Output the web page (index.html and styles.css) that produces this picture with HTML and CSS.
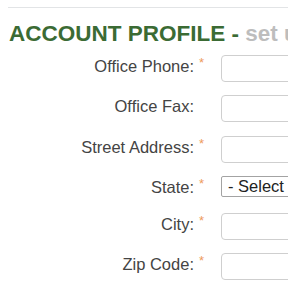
FILE: index.html
```html
<!DOCTYPE html>
<html>
<head>
<meta charset="utf-8">
<link rel="stylesheet" href="styles.css">
</head>
<body>
<div class="rule"></div>
<h1 class="title">ACCOUNT PROFILE - <span class="sub">set up your account</span></h1>
<form class="form">
  <div class="row">
    <label class="label">Office Phone:</label><span class="req">*</span>
    <input class="field" type="text">
  </div>
  <div class="row">
    <label class="label">Office Fax:</label><span class="req"></span>
    <input class="field" type="text">
  </div>
  <div class="row">
    <label class="label">Street Address:</label><span class="req">*</span>
    <input class="field" type="text">
  </div>
  <div class="row row-select">
    <label class="label">State:</label><span class="req">*</span>
    <select class="picker"><option>- Select -</option></select>
  </div>
  <div class="row">
    <label class="label">City:</label><span class="req">*</span>
    <input class="field" type="text">
  </div>
  <div class="row">
    <label class="label">Zip Code:</label><span class="req">*</span>
    <input class="field" type="text">
  </div>
</form>
</body>
</html>
```
FILE: styles.css
```css
html, body {
  background: #fff;
}
body {
  margin: 7px 0 0 8px;
  width: 280px;
  height: 281px;
  overflow: hidden;
  font-family: "Liberation Sans", Arial, sans-serif;
}
.rule {
  border-top: 1px solid #e2e4e6;
  width: 300px;
}
.title {
  margin: 13px 0 0 1px;
  font-size: 22.5px;
  line-height: 26px;
  font-weight: bold;
  color: #3b6b34;
  white-space: nowrap;
}
.sub {
  color: #bdbdbd;
}
.form {
  margin-top: 7.5px;
  display: flex;
  flex-direction: column;
  gap: 13.5px;
}
.row {
  display: grid;
  grid-template-columns: 186px 27px 200px;
  align-items: start;
  height: 27px;
}
.row-select {
  height: 23px;
}
.label {
  text-align: right;
  font-size: 16.5px;
  line-height: 18px;
  padding-top: 2px;
  color: #444;
  white-space: nowrap;
}
.req {
  padding-left: 5px;
  padding-top: 1px;
  font-size: 13px;
  line-height: 13px;
  color: #ee9a5c;
}
.field {
  box-sizing: border-box;
  width: 200px;
  height: 27px;
  margin: 0;
  border: 1px solid #cfcfcf;
  border-radius: 4px;
  background: #fff;
}
.picker {
  box-sizing: border-box;
  appearance: none;
  -webkit-appearance: none;
  width: 200px;
  height: 21px;
  margin: 0;
  padding: 0 6px;
  border: 1px solid #a3a3a3;
  border-radius: 2px;
  background: #fff;
  font-family: "Liberation Sans", Arial, sans-serif;
  font-size: 16.5px;
  line-height: 19px;
  color: #222;
}
```
